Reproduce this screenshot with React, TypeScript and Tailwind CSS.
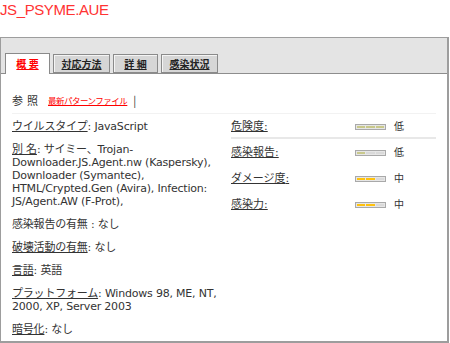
import React from "react";

const latin = "font-['DejaVu_Sans','Noto_Sans_CJK_JP',sans-serif]";

function Meter({ filled, color }: { filled: number; color: "olive" | "amber" }) {
  const on = color === "olive" ? "bg-[#c9c98c]" : "bg-[#ffc20e]";
  return (
    <div className="flex h-[6px] w-[31px] gap-[1px] border border-[#a9a9a9] bg-[#e6e6e6] p-[1px]">
      {[0, 1, 2].map((i) => (
        <div key={i} className={`flex-1 ${i < filled ? on : "bg-[#d9d9d9]"}`} />
      ))}
    </div>
  );
}

function Tab({ label, active, w }: { label: string; active?: boolean; w: string }) {
  return (
    <div
      className={`${w} flex h-[19px] items-center justify-center border border-[#8a8a8a] text-[10px] font-bold underline ${
        active
          ? "relative -mb-px h-[21px] border-b-0 bg-white pb-[2px] text-[#ff0000]"
          : "bg-[#d6d6d6] text-[#222] shadow-[inset_1px_1px_0_#f4f4f4]"
      }`}
    >
      {label}
    </div>
  );
}

function Row({ label, filled, color, level }: { label: string; filled: number; color: "olive" | "amber"; level: string }) {
  return (
    <div className="flex h-[14px] items-center">
      <span className="w-[124px] underline">{label}:</span>
      <Meter filled={filled} color={color} />
      <span className="ml-[8px] text-[10px]">{level}</span>
    </div>
  );
}

export default function App() {
  return (
    <div className={`h-[343px] w-[450px] overflow-hidden bg-white text-[#333] ${latin}`}>
      <div className="h-[37px] pt-px font-['Liberation_Sans',sans-serif] text-[15px] leading-[18px] tracking-[-0.4px] text-[#f33]">
        JS_PSYME.AUE
      </div>
      <div className="h-[306px] w-[449px] overflow-hidden border-t border-l border-r-2 border-b-2 border-[#9d9d9d]">
        <div className="flex h-[36px] items-end gap-[3px] border-b border-[#8d8d8d] bg-[#e4e4e4] pl-[4px] font-['Noto_Sans_CJK_JP',sans-serif]">
          <Tab label="概 要" active w="w-[45px]" />
          <Tab label="対応方法" w="w-[57px]" />
          <Tab label="詳 細" w="w-[45px]" />
          <Tab label="感染状況" w="w-[57px]" />
        </div>
        <div className="px-[11px] pt-[19px] text-[11px] leading-[14px]">
          <div className="flex items-center font-['Noto_Sans_CJK_JP',sans-serif]">
            <span className="mr-[6px] tracking-[4px]">参照</span>
            <span className="text-[8.5px] tracking-[-0.5px] text-[#f00] underline">最新パターンファイル</span>
            <span className="ml-[6px]">|</span>
          </div>
          <div className="mt-[6px] flex border-t border-[#f2f2f2] pt-[6px]">
            <div className="w-[218px] pr-[8px] leading-[13px] tracking-[-0.2px]">
              <p className="mb-[10px]">
                <span className="underline">ウイルスタイプ</span>: JavaScript
              </p>
              <p className="mb-[10px]">
                <span className="underline">別 名</span>: サイミー、Trojan-Downloader.JS.Agent.nw (Kaspersky), Downloader (Symantec), HTML/Crypted.Gen (Avira), Infection: JS/Agent.AW (F-Prot),
              </p>
              <p className="mb-[10px]">感染報告の有無 : なし</p>
              <p className="mb-[10px]">
                <span className="underline">破壊活動の有無</span>: なし
              </p>
              <p className="mb-[10px]">
                <span className="underline">言語</span>: 英語
              </p>
              <p className="mb-[10px]">
                <span className="underline">プラットフォーム</span>: Windows 98, ME, NT, 2000, XP, Server 2003
              </p>
              <p>
                <span className="underline">暗号化</span>: なし
              </p>
            </div>
            <div className="flex-1 pl-[1px]">
              <Row label="危険度" filled={3} color="olive" level="低" />
              <div className="mb-[7px] mt-[3px] h-[2px] bg-[#e8e8e8]" />
              <div className="flex flex-col gap-[12px]">
                <Row label="感染報告" filled={1} color="olive" level="低" />
                <Row label="ダメージ度" filled={2} color="amber" level="中" />
                <Row label="感染力" filled={2} color="amber" level="中" />
              </div>
            </div>
          </div>
        </div>
      </div>
    </div>
  );
}
